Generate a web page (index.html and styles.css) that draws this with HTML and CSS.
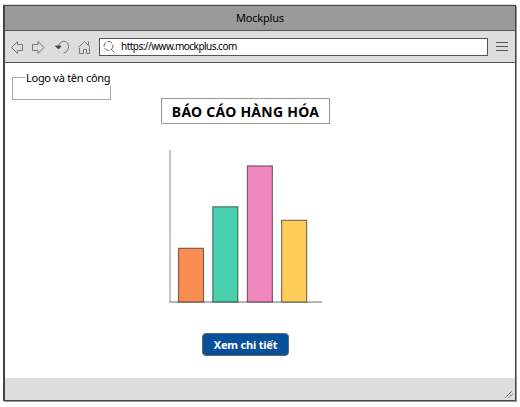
FILE: index.html
```html
<!DOCTYPE html>
<html lang="vi">
<head>
<meta charset="utf-8">
<title>Mockplus</title>
<link rel="stylesheet" href="styles.css">
</head>
<body>
<div class="window">
  <header class="titlebar"><span>Mockplus</span></header>
  <nav class="toolbar">
    <svg class="nav-icons" width="84" height="20" viewBox="0 0 84 20" fill="none" stroke="#777" stroke-width="1">
      <path d="M5.500 10.500 11.500 4.500V7.500H16.500V13.500H11.500V16.500Z"/>
      <path d="M38 10.500 32 4.500V7.500H26.500V13.500H32V16.500Z"/>
      <path d="M52.500 9.500C53.500 2.500 62.500 2.500 62.500 9.500C62.500 13 60.500 15.500 57.500 16"/>
      <path d="M49.500 9H55L52.500 12Z" fill="#444" stroke="#444"/>
      <path d="M73.500 11V16.500H77.500V12.500H80.500V16.500H83.500V10.500M72.500 10.500 78.500 4.500 84 10M82.500 4.500V8"/>
    </svg>
    <div class="address">
      <svg width="14" height="14" viewBox="0 0 14 14" fill="none" stroke="#666">
        <circle cx="5.500" cy="6" r="4.500" stroke-dasharray="5 1.500"/><path d="M8.500 9.500 11.500 12.500"/>
      </svg>
      <span class="url">https://www.mockplus.com</span>
    </div>
    <svg class="menu" width="12" height="10" viewBox="0 0 12 10" stroke="#555"><path d="M0 .5H12M0 4.500H12M0 8.500H12"/></svg>
  </nav>
  <main class="page">
    <div class="group"><span class="legend">Logo và tên công</span></div>
    <h1 class="heading"><span>BÁO CÁO HÀNG HÓA</span></h1>
    <svg class="chart" width="156" height="156" viewBox="168 149 156 156">
      <path d="M170 150V302" stroke="#aaa" stroke-width="1.300"/>
      <path d="M169 302H322" stroke="#b5b5b5" stroke-width="2"/>
      <g stroke="#000" stroke-opacity=".5" stroke-width="1.200">
        <rect x="178.500" y="248.300" width="25" height="53.700" fill="#fc8d52"/>
        <rect x="212.800" y="206.800" width="25" height="95.200" fill="#49d1af"/>
        <rect x="247.400" y="165.900" width="25" height="136.100" fill="#ed87bd"/>
        <rect x="281.600" y="220.300" width="25" height="81.700" fill="#fecd57"/>
      </g>
    </svg>
    <button class="details"><span>Xem chi tiết</span></button>
  </main>
  <footer class="statusbar">
    <svg width="8" height="8" viewBox="0 0 8 8" stroke="#444" fill="none"><path d="M.5 7.500 7 1M4 7.500 7.500 4" stroke-dasharray="1.600 .6"/></svg>
  </footer>
</div>
</body>
</html>
```
FILE: styles.css
```css
* { box-sizing: border-box; }
body {
  margin: 0;
  padding: 5px 4px 6px 3px;
  background: #fff;
  color: #000;
  font-family: "Noto Sans", "Open Sans", sans-serif;
}
.window {
  width: 513px;
  height: 396px;
  display: flex;
  flex-direction: column;
  border: 1px solid #444;
  border-left-width: 2px;
  box-shadow: 1px 1px 0 #999, 0 -1px 0 #ddd;
}
.titlebar {
  height: 25px;
  flex: none;
  display: flex;
  justify-content: center;
  align-items: center;
  padding-bottom: 1px;
  background: #999;
  border-bottom: 1px solid #555;
  font-size: 11px;
  letter-spacing: -.2px;
}
.toolbar {
  height: 32px;
  flex: none;
  display: flex;
  align-items: center;
  background: #ddd;
  border-bottom: 1px solid #555;
}
.nav-icons { display: block; margin-left: 1px; overflow: visible; }
.address {
  width: 389px;
  height: 18px;
  margin-left: 9px;
  padding-left: 3px;
  display: flex;
  align-items: center;
  background: #fff;
  border: 1px solid #555;
}
.url { margin: -1px 0 0 4px; font-size: 10px; letter-spacing: -.53px; }
.menu { margin-left: 8px; }
.page {
  flex: 1;
  position: relative;
  display: flex;
  flex-direction: column;
  align-items: flex-start;
  background: #fff;
}
.group {
  width: 99px;
  height: 23px;
  margin: 14px 0 0 7px;
  border: 1px solid #aaa;
}
.legend {
  display: block;
  width: 87px;
  margin: -8px 0 0 12px;
  padding-left: 1px;
  background: #fff;
  white-space: nowrap;
  font-size: 11px;
  line-height: 16px;
  letter-spacing: -.27px;
}
.heading {
  width: 169px;
  height: 26px;
  margin: -2px 0 0 156px;
  display: flex;
  align-items: center;
  justify-content: center;
  border: 1px solid #999;
  font-size: 14px;
  font-weight: 700;
  letter-spacing: .25px;
  white-space: nowrap;
}
.chart { display: block; margin: 25px 0 0 163px; }
.details {
  width: 87px;
  height: 23px;
  margin: 28px 0 0 197px;
  padding: 0;
  border: 1px solid #666;
  border-radius: 4px;
  background: #07519a;
  color: #fff;
  font: 700 11px "Noto Sans", sans-serif;
  letter-spacing: -.2px;
  white-space: nowrap;
}
.statusbar {
  height: 22px;
  flex: none;
  display: flex;
  justify-content: flex-end;
  align-items: flex-end;
  padding: 0 2px 2px 0;
  background: #ddd;
}
```
